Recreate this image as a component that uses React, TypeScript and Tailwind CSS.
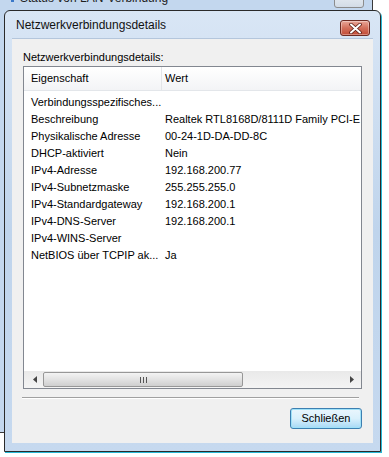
import React from "react";

const ROWS: [string, string][] = [
  ["Verbindungsspezifisches...", ""],
  ["Beschreibung", "Realtek RTL8168D/8111D Family PCI-E Gigabit Ethernet NIC (NDIS 6.20)"],
  ["Physikalische Adresse", "00-24-1D-DA-DD-8C"],
  ["DHCP-aktiviert", "Nein"],
  ["IPv4-Adresse", "192.168.200.77"],
  ["IPv4-Subnetzmaske", "255.255.255.0"],
  ["IPv4-Standardgateway", "192.168.200.1"],
  ["IPv4-DNS-Server", "192.168.200.1"],
  ["IPv4-WINS-Server", ""],
  ["NetBIOS über TCPIP ak...", "Ja"],
];

export default function App() {
  return (
    <div className="relative w-[389px] h-[457px] overflow-hidden bg-white text-black font-['Liberation_Sans',Arial,sans-serif]">
      {/* window behind */}
      <div className="absolute left-[-30px] top-[-22px] w-[403px] h-[455px] rounded-[6px] border border-[#3a3a3a] bg-[#c3d7ee]">
        <div className="flex items-center h-[28px] pl-[40px]">
          <span className="w-[3px] h-[8px] bg-[#3a78c8] mr-[6px] mt-[10px]" />
          <span className="text-[12px] text-[#1e1e1e] mt-[10px]">Status von LAN-Verbindung</span>
        </div>
        <div className="absolute left-[363px] top-[14px] w-[30px] h-[15px] rounded-b-[3px] border border-[#8c8c8c] bg-gradient-to-b from-[#e9eef4] to-[#d3dce6]" />
      </div>

      {/* dialog */}
      <div className="absolute left-[4px] top-[10px] w-[377px] h-[442px] rounded-t-[6px] border border-[#2a2a2a] shadow-[1px_1px_0_#27b8d6] bg-gradient-to-b from-[#d9e6f5] via-[#bfd4ec] to-[#c6d9ef] flex flex-col">
        <div className="flex items-center justify-between h-[27px] pl-[11px] pr-[10px]">
          <span className="text-[12px] text-[#111] mt-[1px]">Netzwerkverbindungsdetails</span>
          <div className="w-[30px] h-[16px] mt-[7px] rounded-[3px] border border-[#6d2b22] bg-gradient-to-b from-[#e9a799] via-[#d2705c] to-[#c24a35] flex items-center justify-center shadow-[inset_0_0_0_1px_rgba(255,255,255,0.35)]">
            <svg width="13" height="11" viewBox="0 0 13 11">
              <path d="M2 1.5 L11 9.5 M11 1.5 L2 9.5" stroke="#5a1d14" strokeWidth="3.6" strokeLinecap="round" />
              <path d="M2 1.5 L11 9.5 M11 1.5 L2 9.5" stroke="#fff" strokeWidth="2" strokeLinecap="round" />
            </svg>
          </div>
        </div>

        <div className="mx-[7px] h-[405px] bg-[#f0f0f0] border-t border-[#b4c6dc] flex flex-col px-[11px] pt-[10px] text-[11px]">
          <div className="h-[17px] leading-[16px]">Netzwerkverbindungsdetails:</div>

          <div className="h-[323px] border border-[#828790] bg-white flex flex-col">
            <div className="flex h-[24px] border-b border-[#e3e6ea] bg-gradient-to-b from-white to-[#f3f4f6] items-center">
              <div className="w-[138px] h-full flex items-center pl-[7px] border-r border-[#e3e5e8]">Eigenschaft</div>
              <div className="flex-1 pl-[3px]">Wert</div>
            </div>
            <div className="flex-1 pt-[3px] overflow-hidden">
              {ROWS.map(([k, v]) => (
                <div key={k} className="flex h-[17px] items-center whitespace-nowrap">
                  <div className="w-[138px] shrink-0 pl-[7px]">{k}</div>
                  <div className="pl-[3px] shrink-0">{v}</div>
                </div>
              ))}
            </div>
            {/* horizontal scrollbar */}
            <div className="h-[17px] flex items-center bg-gradient-to-b from-[#e9e9e9] to-[#f4f4f4] px-[2px]">
              <div className="w-[17px] flex justify-center">
                <svg width="4" height="7" viewBox="0 0 4 7"><path d="M4 0 L0 3.5 L4 7 Z" fill="#444" /></svg>
              </div>
              <div className="w-[200px] h-[15px] rounded-[2px] border border-[#979797] bg-gradient-to-b from-[#f3f3f3] via-[#e2e2e2] to-[#cfcfcf] flex items-center justify-center gap-[1px]">
                <span className="w-[1px] h-[6px] bg-[#555]" />
                <span className="w-[1px] h-[6px] bg-[#555] ml-[1px]" />
                <span className="w-[1px] h-[6px] bg-[#555] ml-[1px]" />
              </div>
              <div className="flex-1" />
              <div className="w-[15px] flex justify-center">
                <svg width="4" height="7" viewBox="0 0 4 7"><path d="M0 0 L4 3.5 L0 7 Z" fill="#444" /></svg>
              </div>
            </div>
          </div>

          <div className="mt-[8px] h-[2px] border-t border-[#a0a0a0] border-b border-b-white mr-[3px] -ml-[1px]" />

          <div className="mt-[9px] flex justify-end">
            <button className="w-[72px] h-[21px] rounded-[3px] border border-[#3c7fb1] bg-gradient-to-b from-[#eaf6fd] via-[#d9f0fc] to-[#a7d9f5] shadow-[inset_0_0_0_1px_#9fe1f8] text-[11px] text-black leading-none">
              Schließen
            </button>
          </div>
        </div>
      </div>
    </div>
  );
}
